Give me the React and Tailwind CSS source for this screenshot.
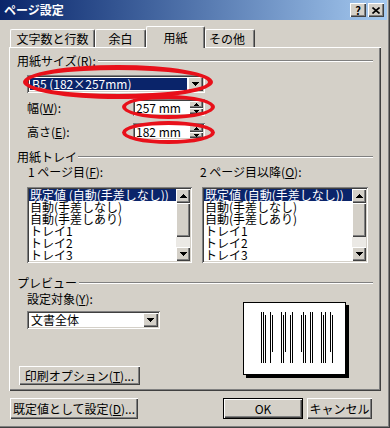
import React from "react";

const RAISED =
  "shadow-[inset_1px_1px_0_#ffffff,inset_-1px_-1px_0_#404040,inset_-2px_-2px_0_#808080]";
const SUNKEN =
  "shadow-[inset_1px_1px_0_#808080,inset_-1px_-1px_0_#ffffff,inset_2px_2px_0_#404040,inset_-2px_-2px_0_#d4d0c8]";

function Tri({ n = 7, up = false }) {
  const rows = Math.ceil(n / 2);
  const rects = [];
  for (let r = 0; r < rows; r++) {
    const y = up ? rows - 1 - r : r;
    rects.push(<rect key={r} x={r} y={y} width={n - 2 * r} height={1} fill="#000" />);
  }
  return (
    <svg width={n} height={rows} viewBox={`0 0 ${n} ${rows}`} shapeRendering="crispEdges">
      {rects}
    </svg>
  );
}

function U({ children }) {
  return <span className="underline underline-offset-[1px]">{children}</span>;
}

function Groove() {
  return <div className="flex-1 h-0 border-t border-t-[#808080] border-b border-b-white" />;
}

function ComboArrow() {
  return (
    <div className={`w-[15px] h-full bg-[#d4d0c8] ${RAISED} flex items-center justify-center`}>
      <Tri n={7} />
    </div>
  );
}

function Spin({ value }) {
  return (
    <div className={`w-[72px] h-[17px] bg-white ${SUNKEN} p-[2px] flex`}>
      <div className="flex-1 text-[12px] leading-[13px] pl-[1px] text-black">{value}</div>
      <div className="w-[14px] flex flex-col">
        <div className={`h-[7px] bg-[#d4d0c8] ${RAISED} flex items-center justify-center`}>
          <Tri n={5} up />
        </div>
        <div className={`h-[6px] bg-[#d4d0c8] ${RAISED} flex items-center justify-center`}>
          <Tri n={5} />
        </div>
      </div>
    </div>
  );
}

const TRAY = [
  "既定値 (自動(手差しなし))",
  "自動(手差しなし)",
  "自動(手差しあり)",
  "トレイ1",
  "トレイ2",
  "トレイ3",
];

function ListBox() {
  return (
    <div className={`h-[76px] bg-white ${SUNKEN} p-[2px] flex`}>
      <div className="flex-1 flex flex-col">
        {TRAY.map((t, i) => (
          <div
            key={t}
            className={`h-[12px] leading-[12px] text-[12px] pl-[1px] whitespace-nowrap ${
              i === 0 ? "bg-[#0a246a] text-white" : "text-black"
            }`}
          >
            {t}
          </div>
        ))}
      </div>
      <div className="w-[14px] flex flex-col">
        <div className={`h-[14px] bg-[#d4d0c8] ${RAISED} flex items-center justify-center`}>
          <Tri n={7} up />
        </div>
        <div className={`h-[34px] bg-[#d4d0c8] ${RAISED}`} />
        <div className="flex-1 bg-[#ebe9e5]" />
        <div className={`h-[14px] bg-[#d4d0c8] ${RAISED} flex items-center justify-center`}>
          <Tri n={7} />
        </div>
      </div>
    </div>
  );
}

function PreviewPage() {
  const groups = [18, 38, 58, 78];
  const offs = [0, 2, 4, 9, 11];
  const tops = [10, 10, 13, 10, 13];
  const bots = [61, 61, 61, 61, 50];
  return (
    <div className="w-[103px] h-[73px] bg-white border border-black shadow-[3px_3px_0_#000]">
      <svg width="101" height="71" viewBox="0 0 101 71" shapeRendering="crispEdges">
        {groups.map((g, gi) =>
          offs.map((o, oi) => (
            <rect
              key={`${gi}-${oi}`}
              x={g + o - 1}
              y={tops[(oi + gi) % 5] - 1}
              width="1"
              height={bots[(oi + gi * 2) % 5] - tops[(oi + gi) % 5]}
              fill="#000"
            />
          ))
        )}
      </svg>
    </div>
  );
}

function Button({ children, className = "", def = false }) {
  return (
    <div
      className={`${className} ${def ? "border border-black" : ""} bg-[#d4d0c8] flex items-center justify-center`}
    >
      <div className={`w-full h-full ${RAISED} flex items-center justify-center text-[12px] leading-[12px] text-black`}>
        {children}
      </div>
    </div>
  );
}

function Tab({ children, className = "", selected = false }) {
  return (
    <div
      className={`${className} ${
        selected ? "h-[22px] -mb-[1px] relative z-10" : "h-[18px]"
      } bg-[#d4d0c8] border-t border-l border-white border-r border-r-[#404040] rounded-t-[2px] shadow-[inset_-1px_0_0_#808080] flex items-center text-[12px] leading-[12px] text-black`}
    >
      {children}
    </div>
  );
}

export default function App() {
  return (
    <div className="w-[390px] h-[428px] bg-[#d4d0c8] relative overflow-hidden font-['Noto_Sans_CJK_JP','Noto_Sans',sans-serif] text-black shadow-[inset_-1px_-1px_0_#404040,inset_-2px_-2px_0_#808080]">
      {/* title bar */}
      <div className="w-[387px] h-[20px] bg-gradient-to-r from-[#0a246a] to-[#a6caf0] flex items-center justify-between pl-[4px] pr-[3px]">
        <div className="text-white font-bold text-[12px] leading-[12px]">ページ設定</div>
        <div className="flex gap-[1px]">
          <div className={`w-[16px] h-[14px] bg-[#d4d0c8] ${RAISED} flex items-center justify-center text-[11px] font-bold leading-[11px]`}>
            ?
          </div>
          <div className={`w-[16px] h-[14px] bg-[#d4d0c8] ${RAISED} flex items-center justify-center ml-[1px]`}>
            <svg width="8" height="7" viewBox="0 0 8 7">
              <path d="M0.5 0.5 L7.5 6.5 M7.5 0.5 L0.5 6.5" stroke="#000" strokeWidth="1.6" />
            </svg>
          </div>
        </div>
      </div>

      {/* tabs */}
      <div className="flex items-end h-[21px] mt-[6px] pl-[10px]">
        <Tab className="w-[85px] justify-center">文字数と行数</Tab>
        <Tab className="w-[51px] justify-center">余白</Tab>
        <Tab className="w-[59px] justify-center" selected>
          用紙
        </Tab>
        <Tab className="w-[50px] pl-[3px]">その他</Tab>
      </div>

      {/* panel */}
      <div className="ml-[9px] w-[372px] h-[344px] border-t border-l border-white shadow-[inset_-1px_-1px_0_#404040,inset_-2px_-2px_0_#808080] flex flex-col pt-[7px] pl-[7px] pr-[8px] text-[12px] leading-[12px]">
        <div className="flex items-center h-[12px]">
          <span className="whitespace-nowrap">
            用紙サイズ(<U>R</U>):
          </span>
          <div className="ml-[2px] flex-1 flex">
            <Groove />
          </div>
        </div>

        <div className={`mt-[8px] ml-[10px] w-[178px] h-[18px] bg-white ${SUNKEN} p-[2px] flex`}>
          <div className="flex-1 p-[1px]">
            <div className="h-full bg-[#0a246a] text-white pl-[2px] leading-[12px] whitespace-nowrap">
              B5 (182×257mm)
            </div>
          </div>
          <ComboArrow />
        </div>

        <div className="mt-[6px] flex items-center">
          <div className="ml-[10px] w-[106px]">
            幅(<U>W</U>):
          </div>
          <Spin value="257 mm" />
        </div>

        <div className="mt-[7px] flex items-center">
          <div className="ml-[10px] w-[106px]">
            高さ(<U>E</U>):
          </div>
          <Spin value="182 mm" />
        </div>

        <div className="mt-[11px] flex items-center h-[12px]">
          <span className="whitespace-nowrap">用紙トレイ</span>
          <div className="ml-[1px] flex-1 flex">
            <Groove />
          </div>
        </div>

        <div className="mt-[3px] ml-[10px] flex gap-[10px]">
          <div className="w-[165px] flex flex-col">
            <div className="h-[12px] whitespace-nowrap pl-[1px]">
              1 ページ目(<U>F</U>):
            </div>
            <div className="mt-[9px]">
              <ListBox />
            </div>
          </div>
          <div className="w-[166px] flex flex-col">
            <div className="h-[12px] whitespace-nowrap -ml-[2px]">
              2 ページ目以降(<U>O</U>):
            </div>
            <div className="mt-[9px]">
              <ListBox />
            </div>
          </div>
        </div>

        <div className="mt-[14px] flex items-center h-[12px]">
          <span className="whitespace-nowrap">プレビュー</span>
          <div className="ml-[2px] flex-1 flex">
            <Groove />
          </div>
        </div>

        <div className="mt-[4px] flex">
          <div className="ml-[2px] w-[215px] flex flex-col">
            <div className="ml-[8px] h-[12px]">
              設定対象(<U>Y</U>):
            </div>
            <div className={`mt-[6px] ml-[8px] w-[133px] h-[18px] bg-white ${SUNKEN} p-[2px] flex`}>
              <div className="flex-1 pl-[2px] pt-[1px] leading-[12px]">文書全体</div>
              <ComboArrow />
            </div>
            <Button className="mt-[37px] w-[121px] h-[19px]">
              印刷オプション(<U>T</U>)...
            </Button>
          </div>
          <div className="ml-[9px] mt-[9px]">
            <PreviewPage />
          </div>
        </div>
      </div>

      {/* bottom buttons */}
      <div className="mt-[7px] flex">
        <Button className="ml-[10px] w-[128px] h-[21px]">
          既定値として設定(<U>D</U>)...
        </Button>
        <Button className="ml-[85px] w-[80px] h-[21px]" def>
          OK
        </Button>
        <Button className="ml-[4px] w-[65px] h-[21px]">キャンセル</Button>
      </div>

      {/* red annotation ellipses */}
      <div className="absolute left-[23px] top-[65px] w-[190px] h-[34px] rounded-[50%] border-[5px] border-[#e8101a] pointer-events-none" />
      <div className="absolute left-[122px] top-[95px] w-[93px] h-[24px] rounded-[50%] border-[4px] border-[#e8101a] pointer-events-none" />
      <div className="absolute left-[122px] top-[121px] w-[93px] h-[23px] rounded-[50%] border-[4px] border-[#e8101a] pointer-events-none" />
    </div>
  );
}
